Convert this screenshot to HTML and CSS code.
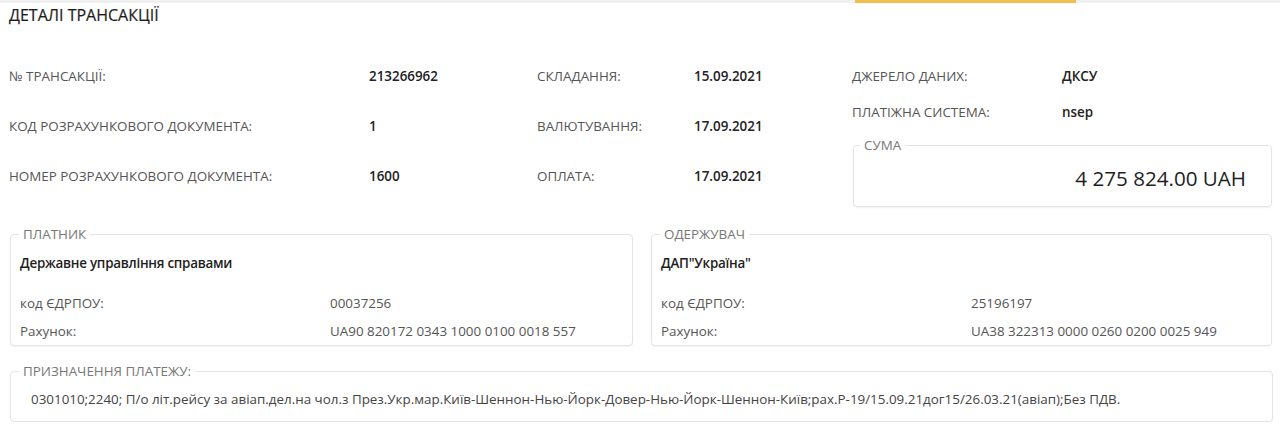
FILE: index.html
```html
<!DOCTYPE html>
<html lang="uk">
<head>
  <meta charset="UTF-8">
  <title>Деталі трансакції</title>
  <link rel="stylesheet" href="styles.css">
</head>
<body>
  <!-- Tab strip -->
  <div class="tabs">
    <div class="tab-active"></div>
  </div>

  <div class="details">
    <h1 class="title">ДЕТАЛІ ТРАНСАКЦІЇ</h1>

    <!-- Top: main info + source / sum -->
    <div class="top">
      <div class="info-grid">
        <div class="label">№ ТРАНСАКЦІЇ:</div>
        <div class="value">213266962</div>
        <div class="label">СКЛАДАННЯ:</div>
        <div class="value">15.09.2021</div>

        <div class="label">КОД РОЗРАХУНКОВОГО ДОКУМЕНТА:</div>
        <div class="value">1</div>
        <div class="label">ВАЛЮТУВАННЯ:</div>
        <div class="value">17.09.2021</div>

        <div class="label">НОМЕР РОЗРАХУНКОВОГО ДОКУМЕНТА:</div>
        <div class="value">1600</div>
        <div class="label">ОПЛАТА:</div>
        <div class="value">17.09.2021</div>
      </div>

      <div class="side">
        <div class="side-row">
          <div class="label">ДЖЕРЕЛО ДАНИХ:</div>
          <div class="value">ДКСУ</div>
        </div>
        <div class="side-row">
          <div class="label">ПЛАТІЖНА СИСТЕМА:</div>
          <div class="value">nsep</div>
        </div>
        <fieldset class="box sum-box">
          <legend>СУМА</legend>
          <div class="amount">4 275 824.00 UAH</div>
        </fieldset>
      </div>
    </div>

    <!-- Parties -->
    <div class="parties">
      <fieldset class="box party">
        <legend>ПЛАТНИК</legend>
        <div class="party-name">Державне управління справами</div>
        <div class="party-row">
          <span>код ЄДРПОУ:</span>
          <span>00037256</span>
        </div>
        <div class="party-row">
          <span>Рахунок:</span>
          <span>UA90 820172 0343 1000 0100 0018 557</span>
        </div>
      </fieldset>

      <fieldset class="box party">
        <legend>ОДЕРЖУВАЧ</legend>
        <div class="party-name">ДАП"Україна"</div>
        <div class="party-row">
          <span>код ЄДРПОУ:</span>
          <span>25196197</span>
        </div>
        <div class="party-row">
          <span>Рахунок:</span>
          <span>UA38 322313 0000 0260 0200 0025 949</span>
        </div>
      </fieldset>
    </div>

    <!-- Payment purpose -->
    <fieldset class="box purpose">
      <legend>ПРИЗНАЧЕННЯ ПЛАТЕЖУ:</legend>
      <div class="purpose-text">0301010;2240; П/о літ.рейсу за авіап.дел.на чол.з През.Укр.мар.Київ-Шеннон-Нью-Йорк-Довер-Нью-Йорк-Шеннон-Київ;рах.Р-19/15.09.21дог15/26.03.21(авіап);Без ПДВ.</div>
    </fieldset>
  </div>
</body>
</html>
```

FILE: styles.css
```css
/* Basic Reset */
* {
  margin: 0;
  padding: 0;
  box-sizing: border-box;
}

body {
  background-color: #ffffff;
  color: #222;
  font-family: "Open Sans", "Noto Sans", Arial, sans-serif;
  font-size: 13.4px;
  line-height: 18px;
  width: 1280px;
  overflow: hidden;
}

/* Tab strip on top */
.tabs {
  height: 3px;
  background-color: #f0f0f0;
  position: relative;
}

.tab-active {
  position: absolute;
  left: 855px;
  top: 0;
  width: 221px;
  height: 3px;
  background-color: #f2c04f;
}

.details {
  padding: 0 8px 0 9px;
}

.title {
  font-size: 16px;
  font-weight: 400;
  line-height: 22px;
  color: #1e1e1e;
  margin-top: 1px;
  -webkit-text-stroke: 0.2px #1e1e1e;
}

/* Top section */
.top {
  display: flex;
  margin-top: 41px;
}

.info-grid {
  display: grid;
  grid-template-columns: 360px 168px 157px 158px;
  grid-auto-rows: 50px;
  width: 843px;
}

.label {
  color: #555;
}

.value {
  color: #222;
  font-weight: 600;
}

.side {
  flex: 1;
  display: flex;
  flex-direction: column;
}

.side-row {
  display: grid;
  grid-template-columns: 210px 1fr;
  height: 36px;
}

/* Framed boxes */
.box {
  border: 1px solid #e2e4e8;
  border-radius: 4px;
  box-shadow: 0 1px 2px rgba(0, 0, 0, 0.06);
}

.box legend {
  color: #777;
  padding: 0 4px;
  margin-left: -1px;
  line-height: 18px;
}

.sum-box {
  margin-left: 1px;
  padding: 0 25px 0 7px;
  height: 71px;
  margin-top: -3px;
}

.amount {
  text-align: right;
  font-size: 20.6px;
  line-height: 26px;
  margin-top: 11px;
  color: #1e1e1e;
}

/* Parties */
.parties {
  display: grid;
  grid-template-columns: 623px 621px;
  column-gap: 18px;
  margin-top: 8px;
  padding-left: 1px;
}

.party {
  padding: 0 9px 5px 9px;
  height: 121px;
}

.party-name {
  font-weight: 600;
  letter-spacing: -0.25px;
  color: #1e1e1e;
  margin-top: 11px;
  margin-bottom: 22px;
}

.party-row {
  display: grid;
  grid-template-columns: 310px 1fr;
  color: #555;
  height: 28px;
}

/* Payment purpose */
.purpose {
  margin-top: 16px;
  margin-left: 1px;
  width: 1263px;
  height: 60px;
  padding: 0 9px 0 9px;
}

.purpose-text {
  color: #444;
  padding-left: 11px;
  margin-top: 10px;
  white-space: nowrap;
}
```
